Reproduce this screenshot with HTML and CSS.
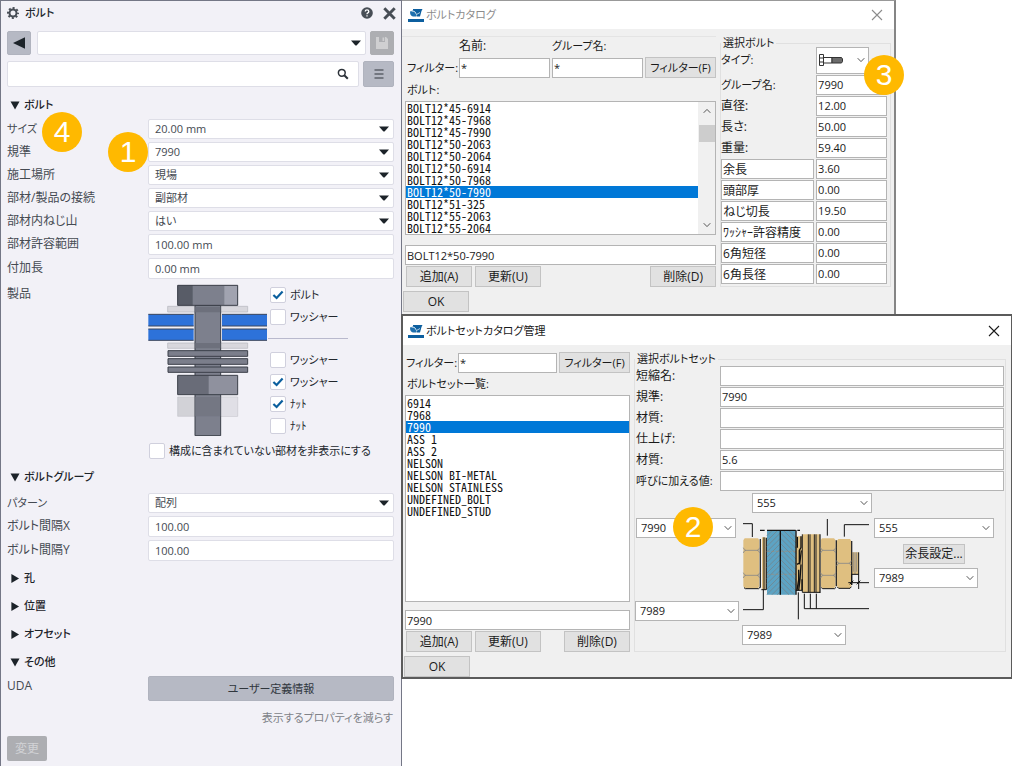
FILE: index.html
```html
<!DOCTYPE html>
<html lang="ja">
<head>
<meta charset="utf-8">
<meta name="viewport" content="width=device-width, initial-scale=1">
<title>ボルト</title>
<link rel="stylesheet" href="styles.css">
</head>
<body>
<svg class="sprite" aria-hidden="true">
  <symbol id="caret" viewBox="0 0 10 6"><path d="M0 0.5H10L5.8 5.2Q5 6 4.2 5.2Z" fill="#1c2329"/></symbol>
  <symbol id="chevron" viewBox="0 0 8 6"><path d="M0.7 1.2L4 4.6L7.3 1.2" fill="none" stroke="#555" stroke-width="1"/></symbol>
  <symbol id="cross" viewBox="0 0 12 12"><path d="M1 1L11 11M11 1L1 11" fill="none" stroke="currentColor" stroke-width="1.1"/></symbol>
  <symbol id="tick" viewBox="0 0 12 10"><path d="M1.4 5L4.6 8L10.6 1.6" fill="none" stroke="#0b5f9e" stroke-width="2.2"/></symbol>
  <symbol id="applogo" viewBox="0 0 16 14">
    <path d="M0 11H16V14H0Z" fill="#0d5f9f"/>
    <path d="M5 1H14.500L13.500 3L12 8.500H8.500L8 4.500L5 2.500Z" fill="#0d5f9f"/>
    <path d="M2 3.500L5 2.500L8 5V8.500H5Q2 8 2 3.500Z" fill="#1f70ae"/>
    <path d="M3.500 3.200L6.500 3.500L8.500 6.500L12 4.500" fill="none" stroke="#dbe8f2" stroke-width=".8"/>
  </symbol>
</svg>

<main class="desktop">
  <section class="panel" aria-label="ボルト">
    <header class="panel-head">
      <svg class="gear" viewBox="0 0 12 12" aria-hidden="true"><circle cx="6" cy="6" r="3.500" fill="none" stroke="#474d55" stroke-width="2"/><circle cx="6" cy="6" r="5" fill="none" stroke="#474d55" stroke-width="2" stroke-dasharray="2 1.927" stroke-dashoffset="1"/></svg>
      <h1>ボルト</h1>
      <button class="bare" aria-label="ヘルプ"><svg class="help" viewBox="0 0 12 12"><circle cx="6" cy="6" r="5.800" fill="#474d55"/><path d="M4.200 4.500Q4.300 2.900 6 2.900Q7.800 2.900 7.800 4.400Q7.800 5.300 6.800 5.900Q6 6.300 6 7.200M6 8.200V9.600" fill="none" stroke="#fff" stroke-width="1.300"/></svg></button>
      <button class="bare" aria-label="閉じる"><svg class="shut" viewBox="0 0 12 12"><path d="M1.200 1.200L10.800 10.800M10.800 1.200L1.200 10.800" stroke="#474d55" stroke-width="2.700"/></svg></button>
    </header>
    <div class="bar bar-preset">
      <button class="tool" aria-label="戻る"><svg class="i12" viewBox="0 0 12 12"><path d="M0 6L12 0.300V11.700Z" fill="#1c2329"/></svg></button>
      <span class="combo"><select aria-label="プリセット"><option></option></select><svg class="caret"><use href="#caret"/></svg></span>
      <button class="tool off" aria-label="保存" disabled><svg class="i14" viewBox="0 0 14 14"><path d="M1 1H11L13 3V13H1Z" fill="#cfcfd1"/><path d="M4 1H10V6H4Z" fill="#adaeb2"/><path d="M7.500 1.500H9.200V5H7.500Z" fill="#cfcfd1"/></svg></button>
    </div>
    <div class="bar bar-search">
      <label class="search"><input type="text" aria-label="検索"><svg class="i12" viewBox="0 0 12 12"><circle cx="4.800" cy="4.800" r="3.400" fill="none" stroke="#2b3138" stroke-width="1.500"/><path d="M7.300 7.300L10.800 10.800" stroke="#2b3138" stroke-width="2"/></svg></label>
      <button class="tool wide" aria-label="メニュー"><svg class="i10" viewBox="0 0 10 10"><path d="M0.500 1H9.500M0.500 5H9.500M0.500 9H9.500" stroke="#30363d" stroke-width="1.200"/></svg></button>
    </div>

    <h2 class="sect first"><svg class="tri" viewBox="0 0 10 10"><path d="M0 0.500H10L5 9.500Z"/></svg>ボルト</h2>
    <div class="row"><label class="kana" for="f1">サイズ</label><span class="combo"><select id="f1"><option>20.00 mm</option></select><svg class="caret"><use href="#caret"/></svg></span><b class="badge four">4</b></div>
    <div class="row"><label for="f2">規準</label><span class="combo"><select id="f2"><option>7990</option></select><svg class="caret"><use href="#caret"/></svg></span><b class="badge one">1</b></div>
    <div class="row"><label for="f3">施工場所</label><span class="combo"><select id="f3"><option>現場</option></select><svg class="caret"><use href="#caret"/></svg></span></div>
    <div class="row"><label for="f4">部材/製品の接続</label><span class="combo"><select id="f4"><option>副部材</option></select><svg class="caret"><use href="#caret"/></svg></span></div>
    <div class="row"><label for="f5">部材内ねじ山</label><span class="combo"><select id="f5"><option>はい</option></select><svg class="caret"><use href="#caret"/></svg></span></div>
    <div class="row text"><label for="f6">部材許容範囲</label><input id="f6" type="text" value="100.00 mm"></div>
    <div class="row text"><label for="f7">付加長</label><input id="f7" type="text" value="0.00 mm"></div>
    <div class="assembly">
      <span class="name">製品</span>
      <svg class="boltpic" viewBox="21 12 360 456" role="img" aria-label="ボルト構成">
        <g fill="#bdbec4" fill-opacity=".5" stroke="#b4b5bc" stroke-width="2"><path d="M80 79H320V96H80ZM80 189H320V205H80Z"/></g>
        <path d="M110 351H290V409H110Z" fill="#d2d2d7" stroke="#c4c5cb" stroke-width="2"/><path d="M240 352H289V408H240Z" fill="#e0dfe6"/>
        <g fill="#2d72d9"><path d="M22 103H158V138H22ZM22 147H158V181H22ZM243 103H378V138H243ZM243 147H378V181H243Z"/></g>
        <path d="M22 103H158M22 138H158M22 147H158M22 181H158M243 103H378M243 138H378M243 147H378M243 181H378" stroke="#3b465c" stroke-width="3"/>
        <path d="M162 76H239V467H162Z" fill="#7d808d" stroke="#3b3f49" stroke-width="3"/>
        <path d="M163 80H238V97H163ZM163 189H238V205H163Z" fill="#6d707c"/><path d="M163 351H238V409H163Z" fill="#747783"/>
        <path d="M110 16H290V76H110Z" fill="#7d808d"/><path d="M110 16H155V76H110Z" fill="#585c67"/><path d="M250 16H290V76H250Z" fill="#a1a3b0"/>
        <path d="M110 16H290V76H110Z" fill="none" stroke="#3b3f49" stroke-width="3"/>
        <path d="M81 212H320V229H81ZM81 236H320V253H81ZM81 261H320V277H81Z" fill="#7b7e8b" stroke="#3b3f49" stroke-width="3"/>
        <path d="M110 286H204V344H110Z" fill="#696c78"/><path d="M203 286H290V344H203Z" fill="#8f919e"/>
        <path d="M110 286H290V344H110Z" fill="none" stroke="#3b3f49" stroke-width="3"/>
      </svg>
      <div class="opts">
        <label><span class="cb"><input type="checkbox" checked><svg><use href="#tick"/></svg></span>ボルト</label>
        <label><span class="cb"><input type="checkbox"></span>ワッシャー</label>
        <hr>
        <label><span class="cb"><input type="checkbox"></span>ワッシャー</label>
        <label><span class="cb"><input type="checkbox" checked><svg><use href="#tick"/></svg></span>ワッシャー</label>
        <label><span class="cb"><input type="checkbox" checked><svg><use href="#tick"/></svg></span>ﾅｯﾄ</label>
        <label><span class="cb"><input type="checkbox"></span>ﾅｯﾄ</label>
      </div>
    </div>
    <label class="hideopt"><span class="cb"><input type="checkbox"></span>構成に含まれていない部材を非表示にする</label>

    <h2 class="sect second"><svg class="tri" viewBox="0 0 10 10"><path d="M0 0.500H10L5 9.500Z"/></svg>ボルトグループ</h2>
    <div class="row"><label class="kana" for="g1">パターン</label><span class="combo"><select id="g1"><option>配列</option></select><svg class="caret"><use href="#caret"/></svg></span></div>
    <div class="row text"><label for="g2">ボルト間隔X</label><input id="g2" type="text" value="100.00"></div>
    <div class="row text"><label for="g3">ボルト間隔Y</label><input id="g3" type="text" value="100.00"></div>
    <h2 class="sect"><svg class="tri" viewBox="0 0 10 10"><path d="M1 0V10L9.500 5Z"/></svg>孔</h2>
    <h2 class="sect"><svg class="tri" viewBox="0 0 10 10"><path d="M1 0V10L9.500 5Z"/></svg>位置</h2>
    <h2 class="sect"><svg class="tri" viewBox="0 0 10 10"><path d="M1 0V10L9.500 5Z"/></svg>オフセット</h2>
    <h2 class="sect"><svg class="tri" viewBox="0 0 10 10"><path d="M0 0.500H10L5 9.500Z"/></svg>その他</h2>
    <div class="row"><span class="name">UDA</span><button class="uda kana">ユーザー定義情報</button></div>
    <a class="less kana" href="#">表示するプロパティを減らす</a>
    <button class="modify" disabled>変更</button>
  </section>

  <div class="windows">
    <section class="win catalog" aria-label="ボルトカタログ">
      <header class="title dim"><svg class="logo"><use href="#applogo"/></svg><h2>ボルトカタログ</h2><button class="bare" aria-label="閉じる"><svg class="x"><use href="#cross"/></svg></button></header>
      <div class="body">
        <div class="left">
          <div class="filters">
            <label class="top-name" for="n1">名前:</label><label class="top-group kana" for="n2">グループ名:</label>
            <span class="lead kana">フィルター:</span><input id="n1" type="text" value="*"><input id="n2" type="text" value="*"><button class="btn kana">フィルター(F)</button>
          </div>
          <p class="caption">ボルト:</p>
          <div class="listwrap">
            <ul class="list" role="listbox" aria-label="ボルト">
              <li role="option">BOLT12*45-6914</li><li role="option">BOLT12*45-7968</li><li role="option">BOLT12*45-7990</li><li role="option">BOLT12*50-2063</li><li role="option">BOLT12*50-2064</li><li role="option">BOLT12*50-6914</li><li role="option">BOLT12*50-7968</li><li role="option" aria-selected="true">BOLT12*50-7990</li><li role="option">BOLT12*51-325</li><li role="option">BOLT12*55-2063</li><li role="option">BOLT12*55-2064</li>
            </ul>
            <div class="scroll" aria-hidden="true"><svg class="flip"><use href="#chevron"/></svg><i></i><svg><use href="#chevron"/></svg></div>
          </div>
          <input class="current" type="text" value="BOLT12*50-7990" aria-label="選択名">
          <div class="actions"><button class="btn">追加(A)</button><button class="btn">更新(U)</button><button class="btn last">削除(D)</button></div>
        </div>
        <fieldset class="props">
          <legend>選択ボルト</legend>
          <div class="prop type"><label class="kana" for="p0">タイプ:</label><span class="combo pic"><select id="p0"><option aria-label="六角ボルト"></option></select><svg class="mini" viewBox="0 0 24 12"><path d="M0.500 0.500H4.500V11.500H0.500ZM0.500 4H4.500M0.500 8H4.500M4.500 3.500H13V9H4.500" fill="#fff" stroke="#333" stroke-width="1"/><path d="M13 3.500H22.500L23.500 5V7.500L22.500 9H13Z" fill="#6c6c6c" stroke="#333" stroke-width="1"/></svg><svg class="chev"><use href="#chevron"/></svg></span><b class="badge three">3</b></div>
          <div class="prop"><label class="kana" for="p1">グループ名:</label><input id="p1" type="text" value="7990"></div>
          <div class="prop"><label for="p2">直径:</label><input id="p2" type="text" value="12.00"></div>
          <div class="prop"><label for="p3">長さ:</label><input id="p3" type="text" value="50.00"></div>
          <div class="prop"><label for="p4">重量:</label><input id="p4" type="text" value="59.40"></div>
          <div class="prop"><input class="key" type="text" value="余長" aria-label="項目1"><input type="text" value="3.60" aria-label="余長"></div>
          <div class="prop"><input class="key" type="text" value="頭部厚" aria-label="項目2"><input type="text" value="0.00" aria-label="頭部厚"></div>
          <div class="prop"><input class="key" type="text" value="ねじ切長" aria-label="項目3"><input type="text" value="19.50" aria-label="ねじ切長"></div>
          <div class="prop"><input class="key" type="text" value="ﾜｯｼｬｰ許容精度" aria-label="項目4"><input type="text" value="0.00" aria-label="許容精度"></div>
          <div class="prop"><input class="key" type="text" value="6角短径" aria-label="項目5"><input type="text" value="0.00" aria-label="6角短径"></div>
          <div class="prop"><input class="key" type="text" value="6角長径" aria-label="項目6"><input type="text" value="0.00" aria-label="6角長径"></div>
        </fieldset>
      </div>
      <button class="btn ok">OK</button>
    </section>

    <section class="win sets" aria-label="ボルトセットカタログ管理">
      <header class="title"><svg class="logo"><use href="#applogo"/></svg><h2>ボルトセットカタログ管理</h2><button class="bare" aria-label="閉じる"><svg class="x"><use href="#cross"/></svg></button></header>
      <div class="body">
        <div class="left">
          <div class="filters"><label class="kana" for="s0">フィルター:</label><input id="s0" type="text" value="*"><button class="btn kana">フィルター(F)</button></div>
          <p class="caption">ボルトセット一覧:</p>
          <div class="listwrap">
            <ul class="list" role="listbox" aria-label="ボルトセット一覧">
              <li role="option">6914</li><li role="option">7968</li><li role="option" aria-selected="true">7990</li><li role="option">ASS 1</li><li role="option">ASS 2</li><li role="option">NELSON</li><li role="option">NELSON BI-METAL</li><li role="option">NELSON STAINLESS</li><li role="option">UNDEFINED_BOLT</li><li role="option">UNDEFINED_STUD</li>
            </ul>
          </div>
          <input class="current" type="text" value="7990" aria-label="選択名">
          <div class="actions"><button class="btn">追加(A)</button><button class="btn">更新(U)</button><button class="btn last">削除(D)</button></div>
        </div>
        <fieldset class="props">
          <legend>選択ボルトセット</legend>
          <div class="prop"><label for="s1">短縮名:</label><input id="s1" type="text"></div>
          <div class="prop"><label for="s2">規準:</label><input id="s2" type="text" value="7990"></div>
          <div class="prop"><label for="s3">材質:</label><input id="s3" type="text"></div>
          <div class="prop"><label for="s4">仕上げ:</label><input id="s4" type="text"></div>
          <div class="prop"><label for="s5">材質:</label><input id="s5" type="text" value="5.6"></div>
          <div class="prop"><label class="kana" for="s6">呼びに加える値:</label><input id="s6" type="text"></div>
          <div class="parts">
            <div class="col-a">
              <span class="combo"><select aria-label="ボルト規格"><option>7990</option></select><svg class="chev"><use href="#chevron"/></svg><b class="badge two">2</b></span>
              <span class="combo"><select aria-label="ワッシャー1"><option>7989</option></select><svg class="chev"><use href="#chevron"/></svg></span>
            </div>
            <div class="col-b">
              <span class="combo nut1"><select aria-label="ナット1"><option>555</option></select><svg class="chev"><use href="#chevron"/></svg></span>
              <svg class="stack" viewBox="18 6 384 336" role="img" aria-label="ボルトセット断面">
                <g fill="none" stroke="#111" stroke-width="3"><path d="M21 38H49V78M82 235V296H21M187 244V325M205 248V293H399M223 248V293M241 248V293M274 24V74M325 77V41H399"/></g>
                <g fill="#dfbf80"><path d="M26 82H66L70 88V226L66 232H26L22 226V88ZM78 79H89V235H78ZM180 76H199V238H180ZM199 70H252V244H199ZM258 82H294L299 88V226L294 232H258L254 226V88ZM307 84H342L346 90V224L342 231H307L302 224V90ZM347 124H368V190H347Z"/></g>
                <path d="M73 84V230M91 80V236M347 90V222M252 70V246M301 88V226" fill="none" stroke="#2b2b2b" stroke-width="4"/>
                <path d="M84 79V235M24 230L28 233H68L72 229M256 230L260 233H296L300 229M304 228L308 232H342L346 227M199 244H252M180 238H199M76 236H91" fill="none" stroke="#111" stroke-width="3"/>
                <path d="M199 70V244M217 70V244M222 70V244M235 70V244M240 70V244" stroke="#222" stroke-width="3"/>
                <path d="M195 76V110L190 118V156L183 160M196 118L191 160M188 176V206L183 238M195 160L192 205L188 238M184 78V110M198 205V238" fill="none" stroke="#111" stroke-width="4"/>
                <g fill="none" stroke="#888" stroke-width="2.500"><path d="M22 110Q24 118 30 118H63Q69 118 71 110M22 126Q24 118 30 118M63 118Q69 118 71 126M22 185Q24 193 30 193H63Q69 193 71 185M22 201Q24 193 30 193M63 193Q69 193 71 201"/><path d="M254 110Q256 118 262 118H291Q297 118 299 110M254 126Q256 118 262 118M291 118Q297 118 299 126M254 185Q256 193 262 193H291Q297 193 299 185M254 201Q256 193 262 193M291 193Q297 193 299 201M302 149Q304 157 310 157H338Q344 157 346 149M302 165Q304 157 310 157M338 157Q344 157 346 165M352 124V182M357 124V190M362 124V182"/></g>
                <path d="M93 58H179V251H93Z" fill="#5da3c3"/>
                <path d="M93 74L109 58M93 90L125 58M93 106L133 66M93 122L133 82M93 138L133 98M93 154L133 114M93 170L133 130M93 186L133 146M93 202L133 162M93 218L133 178M93 234L133 194M93 250L133 210M108 251L133 226M124 251L133 242M134 226L159 251M134 210L175 251M134 194L179 239M134 178L179 223M134 162L179 207M134 146L179 191M134 130L179 175M134 114L179 159M134 98L179 143M134 82L179 127M134 66L179 111M142 58L179 95M158 58L179 79" fill="none" stroke="#6f8b98" stroke-width="3"/>
                <path d="M93 121H179M93 190H179" stroke="#a08d78" stroke-width="2" stroke-dasharray="9 4"/>
                <path d="M72 58H86M93 58H179M184 58H192M133 58V251M180 58V251" fill="none" stroke="#111" stroke-width="4"/>
                <path d="M368 124V234M347 190H368M347 190V222M337 215H399M341 220L352 209M362 220L373 209" fill="none" stroke="#111" stroke-width="3"/>
              </svg>
              <span class="combo std"><select aria-label="ワッシャー2"><option>7989</option></select><svg class="chev"><use href="#chevron"/></svg></span>
            </div>
            <div class="col-c">
              <span class="combo"><select aria-label="ナット2"><option>555</option></select><svg class="chev"><use href="#chevron"/></svg></span>
              <button class="btn">余長設定...</button>
              <span class="combo std"><select aria-label="ワッシャー3"><option>7989</option></select><svg class="chev"><use href="#chevron"/></svg></span>
            </div>
          </div>
        </fieldset>
      </div>
      <button class="btn ok">OK</button>
    </section>
  </div>
</main>
</body>
</html>
```
FILE: styles.css
```css
*, *::before, *::after { box-sizing: border-box; }
body {
  margin: 0;
  background: #fff;
  color: #1a1a1a;
  font: 12px/16px "Open Sans", "Noto Sans CJK JP", sans-serif;
  font-feature-settings: "palt";
}
h1, h2, p, ul { margin: 0; padding: 0; font-size: 11px; font-weight: 400; }
button, input, select { font: inherit; font-feature-settings: inherit; color: inherit; margin: 0; border-radius: 0; }
svg { display: block; }
.sprite { display: none; }
.kana { font-size: 11px; }
.bare { display: flex; padding: 0; border: 0; background: none; }
.i10 { width: 10px; height: 10px; }
.i12 { width: 12px; height: 12px; }
.i14 { width: 14px; height: 14px; }

.desktop { display: grid; grid-template-columns: 402fr 610fr; min-height: 100vh; }

/* shared combo box */
.combo { display: grid; min-width: 0; position: relative; }
.combo > select, .combo > svg { grid-area: 1 / 1; }
.combo > select { appearance: none; width: 100%; background: #fff; font-size: 11px; outline: 0; }
.combo > svg { justify-self: end; align-self: center; pointer-events: none; }
.caret { width: 10px; height: 6px; margin-right: 5px; }
.chev { width: 8px; height: 6px; margin-right: 4px; }

.badge {
  position: absolute;
  z-index: 2;
  width: 40px;
  height: 40px;
  border-radius: 50%;
  background: #ffb900;
  color: #fff;
  font: 30px/40px "Liberation Sans", sans-serif;
  text-align: center;
}
.four { left: 35px; top: -7px; }
.one { left: 101px; top: -10px; }
.two { left: 37px; top: -11px; }
.three { right: -17px; top: 9px; }

/* property panel */
.panel {
  display: flex;
  flex-direction: column;
  padding: 0 7px 5px 6px;
  border: 1px solid #747786;
  border-bottom: 0;
  background: #f2f1f7;
  color: #454a52;
}
.panel-head { display: flex; align-items: center; height: 24px; gap: 6px; margin-right: -2px; }
.panel-head h1 { flex: 1; color: #22272d; font-weight: 500; }
.gear, .help { width: 12px; height: 12px; }
.shut { width: 13px; height: 13px; margin-left: 4px; }
.panel select, .panel input[type=text] { border: 1px solid #dedee7; border-radius: 2px; background: #fff; padding: 0 6px; width: 100%; min-width: 0; font-size: 11px; }
.bar { display: flex; }
.bar-preset { height: 24px; margin-top: 6px; gap: 6px; }
.bar-preset .combo { flex: 1; }
.bar-preset .tool { width: 24px; }
.bar-preset .tool:last-child { margin-left: -2px; }
.bar-search { height: 26px; margin-top: 6px; gap: 4px; }
.search { display: grid; flex: 1; }
.search > * { grid-area: 1 / 1; }
.search svg { justify-self: end; align-self: center; margin-right: 10px; }
.tool { display: flex; align-items: center; justify-content: center; padding: 0; border: 1px solid #b0b3be; border-radius: 2px; background: #b6b9c4; }
.tool.off { background: #adaeb2; border-color: #adaeb2; }
.tool.wide { width: 31px; }

.sect { display: flex; align-items: center; gap: 4px; height: 28px; padding-left: 3px; color: #1c2329; font-weight: 500; }
.sect.first { margin-top: 4px; }
.sect.second { height: 32px; margin-top: 2px; }
.tri { width: 10px; height: 9px; fill: #1c2329; }
.row { position: relative; display: grid; grid-template-columns: 141px minmax(0, 1fr); align-items: start; margin-bottom: 3px; }
.row > label, .row > .name, .assembly > .name { padding-top: 2px; }
.row .combo > select { height: 20px; }
.row > input { height: 21px; }
.uda { height: 25px; border: 1px solid #b0b3be; border-radius: 2px; background: #b6b9c4; color: #30363d; }

.assembly { display: flex; margin-top: 2px; }
.assembly .name { flex: 0 0 141px; }
.boltpic { width: 120px; height: 152px; }
.opts label { display: flex; align-items: center; height: 22px; gap: 4px; }
.opts, .hideopt { font-size: 11px; color: #22272d; }
.opts { margin-left: 2px; }
.opts hr { height: 1px; width: 80px; margin: 10px 0 10px -2px; border: 0; background: #b9b9cd; }
.cb { display: grid; place-items: center; width: 16px; height: 16px; flex: none; }
.cb > * { grid-area: 1 / 1; }
.cb input { appearance: none; width: 16px; height: 16px; border: 1px solid #d0d0dd; border-radius: 2px; background: #fff; }
.cb svg { width: 12px; height: 10px; pointer-events: none; }
.hideopt { display: flex; align-items: center; gap: 4px; margin: 6px 0 0 142px; }
.less { align-self: flex-end; margin: 6px 1px 0 0; color: #808288; text-decoration: none; }
.modify { align-self: flex-start; width: 40px; height: 25px; margin-top: 10px; padding: 0; border: 0; border-radius: 2px; background: #adaeb2; color: #d2d3d6; }

/* dialogs */
.windows { display: flex; flex-direction: column; align-items: flex-start; min-width: 0; }
.win { background: #f0f0f0; }
.catalog { width: 81%; min-height: 314px; border-top: 1px solid #999; border-right: 2px solid #858585; }
.sets { width: calc(100% + 1px); margin-left: -1px; border: 2px solid #5b5b5b; border-right-width: 1px; }
.title { display: flex; align-items: center; gap: 2px; height: 28px; padding: 0 11px 0 6px; background: #fff; }
.title h2 { flex: 1; }
.title.dim { color: #8c8c8c; }
.logo { width: 16px; height: 14px; }
.x { width: 12px; height: 12px; }
.sets .title { height: 29px; padding-left: 5px; }
.win .body { display: flex; }
.win input { height: 20px; width: 100%; min-width: 0; padding: 0 1px; border: 1px solid #b4b4b4; background: #fff; font-size: 11px; outline: 0; }
.win .key { font-size: 12px; }
.win .combo > select { height: 20px; padding: 0 4px; border: 1px solid #b4b4b4; }
.btn { height: 21px; padding: 0; border: 1px solid #c3c3c3; background: #e1e1e1; white-space: nowrap; }
.left { min-width: 0; padding-left: 3px; }
.filters { display: grid; align-items: center; white-space: nowrap; }
.catalog .left { flex: 1; border-top: 1px solid #e4e4e4; margin-top: 7px; }
.catalog .filters { grid-template-columns: 50px 1fr 1fr 71px; column-gap: 2px; padding: 0 0 0 2px; }
.catalog .filters .top-name { grid-column: 2; height: 20px; padding-top: 1px; }
.catalog .filters .top-group { grid-column: 3; height: 20px; padding-top: 1px; }
.filters .lead { grid-column: 1; }
.caption { padding-left: 2px; height: 23px; line-height: 23px; }
.listwrap { display: flex; border: 1px solid #b4b4b4; background: #fff; }
.list { flex: 1; list-style: none; font: 12px/12px "Noto Sans CJK JP", sans-serif; font-feature-settings: "hwid"; color: #111; }
.list li { height: 12px; padding-left: 1px; }
.list li[aria-selected=true] { background: #0078d7; color: #fff; }
.scroll { display: flex; flex-direction: column; align-items: center; width: 17px; padding: 6px 0; background: #f0f0f0; }
.scroll svg { width: 8px; height: 6px; }
.flip { transform: scaleY(-1); }
.scroll i { width: 16px; height: 17px; margin: 11px 0 auto; background: #cdcdcd; }
.current { margin-top: 10px; }
.actions { display: flex; gap: 3px; padding: 1px 0 0 1px; }
.actions .btn { width: 66px; }
.actions .last { margin-left: auto; }
.ok { display: block; width: 66px; margin: 4px 0 0 1px; }
.props { min-width: 0; margin: 0; border: 1px solid #e0e0e0; }
.props legend { height: 14px; font-size: 11px; line-height: 14px; padding: 0 2px; }
.prop { position: relative; display: grid; align-items: center; column-gap: 2px; height: 21px; white-space: nowrap; }
.catalog .props { flex: 0 0 171px; margin: 7px 3px 0 4px; padding: 0 3px 1px 0; }
.catalog .prop { grid-template-columns: 93px minmax(0, 1fr); }
.catalog .prop.type { height: 28px; margin-top: -4px; }
.pic { width: 53px; }
.win .pic > select { height: 27px; }
.combo > .mini { width: 24px; height: 12px; justify-self: start; margin-left: 3px; }

.sets .body { padding: 7px 5px 0 0; }
.sets .left { flex: 0 0 227px; padding-left: 2px; }
.sets .filters { grid-template-columns: 50px 1fr 71px; column-gap: 2px; padding-left: 1px; }
.sets .caption { height: 22px; line-height: 22px; }
.sets .listwrap { min-height: 207px; padding-top: 1px; }
.sets .current { margin-top: 8px; }
.sets .props { flex: 1; margin: 0 0 0 4px; padding: 0 1px 5px 0; }
.sets .prop { grid-template-columns: 82px minmax(0, 1fr); padding-left: 1px; }
.sets legend + .prop { margin-top: -1px; }
.parts { display: flex; gap: 3px; margin-top: 2px; }
.col-a { flex: 0 0 104px; display: flex; flex-direction: column; gap: 63px; padding-top: 25px; }
.col-a .combo:first-child { margin-left: 1px; width: 100px; }
.col-b { flex: 0 0 131px; }
.nut1 { width: 120px; margin-left: 10px; }
.stack { width: 128px; height: 112px; }
.std { width: 104px; }
.col-c { display: flex; flex-direction: column; align-items: flex-start; gap: 4px; padding-top: 25px; margin-left: -2px; }
.col-c > :first-child { width: 120px; }
.col-c .btn { width: 62px; height: 20px; margin: 2px 0 0 29px; }
```
